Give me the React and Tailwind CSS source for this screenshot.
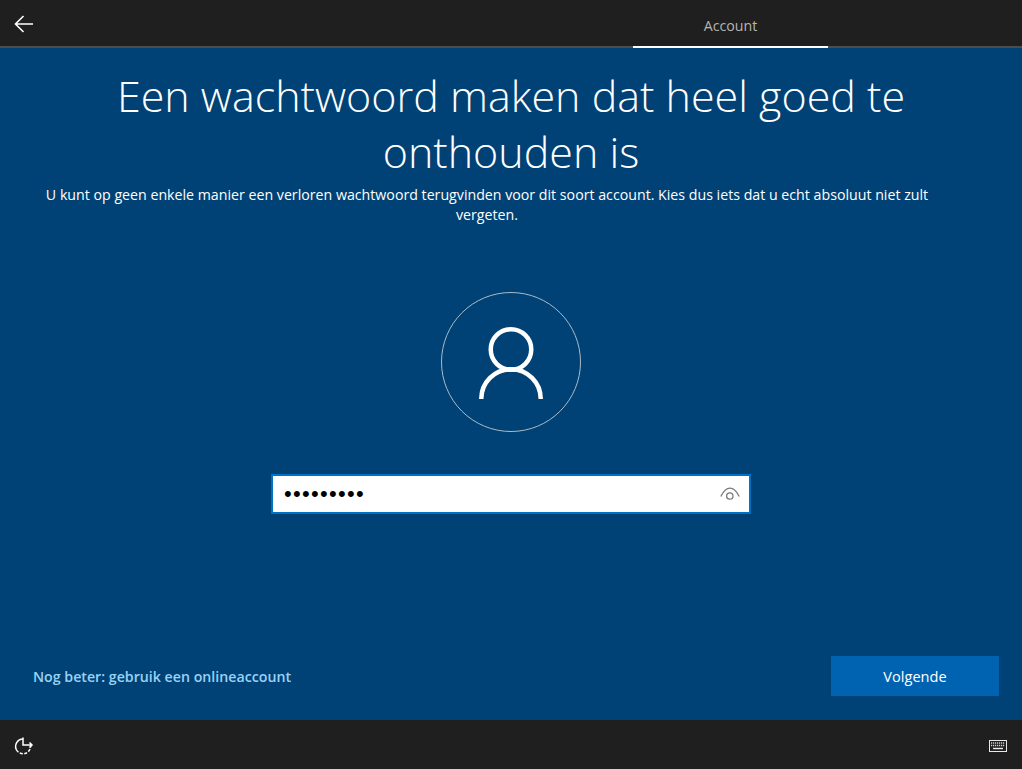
import { useState } from 'react';

const BackArrow = () => (
  <svg width="19" height="18" viewBox="0 0 19 18" fill="none" stroke="white" strokeWidth="1.6">
    <path d="M9.5 1 L1.5 9 L9.5 17 M1.5 9 H19" />
  </svg>
);

const UserIcon = () => (
  <svg width="64" height="72" viewBox="0 0 64 72" fill="none" stroke="white" strokeWidth="4.5">
    <circle cx="32" cy="22.5" r="20.25" />
    <path d="M2.25 72 A29.75 29.75 0 0 1 61.75 72" />
  </svg>
);

const EyeIcon = () => (
  <svg width="20" height="14" viewBox="0 0 20 14" fill="none" stroke="#7a7a7a" strokeWidth="1.3">
    <path d="M0.8 9.5 C4 3 7.5 1.2 10 1.2 C12.5 1.2 16 3 19.2 9.5" />
    <circle cx="9.8" cy="9" r="3.2" />
  </svg>
);

const AccessIcon = () => (
  <svg width="20" height="18" viewBox="0 0 20 18" fill="none" stroke="white" strokeWidth="1.5">
    <path d="M9 2 A7.5 7.5 0 0 0 2.5 13" />
    <path d="M2.5 13 A7.5 7.5 0 0 0 16.5 9.5" strokeDasharray="3 1.5" />
    <path d="M9 0.5 V8 H18 M15.5 5.5 L18 8 L15.5 10.5" />
  </svg>
);

const KeyboardIcon = () => (
  <svg width="18" height="12" viewBox="0 0 18 12" fill="none">
    <rect x="0.5" y="0.5" width="17" height="11" fill="#1f1f1f" stroke="#e8e8e8" />
    <path d="M2 3 H16 M2 5.5 H16" stroke="#d0d0d0" strokeWidth="1.4" strokeDasharray="1.2 0.8" />
    <path d="M4 8.5 H14" stroke="#f0f0f0" strokeWidth="1.4" />
  </svg>
);

export default function App() {
  const [password] = useState('•••••••••');

  return (
    <div className="h-[769px] flex flex-col bg-[#004275] text-white font-['Open_Sans','Noto_Sans',sans-serif] overflow-hidden">
      {/* Top bar */}
      <div className="h-[48px] shrink-0 flex bg-[#1f1f1f] border-b-2 border-[#4d4d4d]">
        <div className="w-[46px] pt-[1px] flex items-center justify-center">
          <BackArrow />
        </div>
        <div className="flex-1" />
        <div className="w-[195px] mr-[194px] h-[48px] pt-[5px] flex items-center justify-center border-b-2 border-white text-[14.2px] text-[#b5b5b5]">
          Account
        </div>
      </div>

      {/* Main */}
      <div className="flex-1 flex flex-col items-center pt-[20px]">
        <h1 className="w-[860px] text-center text-[43px] leading-[56px] font-light">
          Een wachtwoord maken dat heel goed te onthouden is
        </h1>
        <p className="w-[900px] self-start ml-[37px] mt-[5px] text-center text-[14.2px] leading-[20px]">
          U kunt op geen enkele manier een verloren wachtwoord terugvinden voor dit soort account. Kies dus iets dat u echt absoluut niet zult vergeten.
        </p>

        <div className="mt-[67px] w-[140px] h-[140px] pt-[2px] rounded-full border border-[#a9bccb] flex items-center justify-center">
          <UserIcon />
        </div>

        <div className="mt-[42px] w-[480px] h-[40px] bg-white border-2 border-[#0072c6] flex items-center justify-between pl-[11px] pr-[9px]">
          <span className="text-black font-['Liberation_Sans',sans-serif] text-[22px] leading-none tracking-[1.3px]">{password}</span>
          <EyeIcon />
        </div>

        <div className="w-full mt-auto mb-[24px] flex items-center justify-between pl-[33px] pr-[23px]">
          <span className="pt-[2px] text-[14.2px] font-semibold text-[#99d2f5]">Nog beter: gebruik een onlineaccount</span>
          <button className="w-[168px] h-[40px] pt-[2px] bg-[#0063b1] text-[14.6px] text-white">Volgende</button>
        </div>
      </div>

      {/* Bottom bar */}
      <div className="h-[49px] shrink-0 flex items-center justify-between bg-[#1f1f1f] pt-[2px] pl-[14px] pr-[15px]">
        <AccessIcon />
        <KeyboardIcon />
      </div>
    </div>
  );
}
